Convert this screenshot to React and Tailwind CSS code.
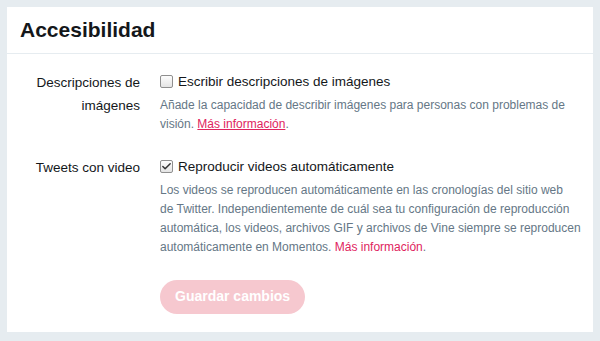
import { Check } from "lucide-react";

const font = { fontFamily: '"Liberation Sans", Arial, sans-serif' };

function Box({ checked }) {
  return (
    <span className="mt-[4px] flex h-[13px] w-[13px] shrink-0 items-center justify-center rounded-[2px] border border-[#8f8f8f] bg-gradient-to-b from-[#fdfdfd] to-[#e4e4e4]">
      {checked && <Check size={11} strokeWidth={3.2} className="text-[#333]" />}
    </span>
  );
}

function Row({ label, option, checked, children }) {
  return (
    <div className="flex">
      <div className="w-[133px] shrink-0 text-right text-[13.5px] leading-[23px] text-[#14171a]">{label}</div>
      <div className="ml-[20px] w-[425px]">
        <label className="flex items-start gap-[5px] text-[13.5px] leading-[21px] text-[#14171a]">
          <Box checked={checked} />
          {option}
        </label>
        <p className="mt-[4px] text-[12px] leading-[19.3px] text-[#657786]">{children}</p>
      </div>
    </div>
  );
}

export default function App() {
  return (
    <div className="h-[341px] w-[600px] bg-[#e6ecf0] px-[7px] pt-[7px]" style={font}>
      <div className="h-[325px] bg-white">
        <div className="border-b border-[#e6ecf0] px-[13px] pt-[8px] pb-[8px]">
          <h1 className="text-[21px] font-bold leading-[30px] text-[#14171a]">Accesibilidad</h1>
        </div>
        <div className="flex flex-col gap-[21px] pt-[17px]">
          <Row label="Descripciones de imágenes" option="Escribir descripciones de imágenes" checked={false}>
            Añade la capacidad de describir imágenes para personas con problemas de
            <br />
            visión. <a href="#" className="text-[#e0245e] underline">Más información</a>.
          </Row>
          <Row label="Tweets con video" option="Reproducir videos automáticamente" checked>
            Los videos se reproducen automáticamente en las cronologías del sitio web
            <br />
            de Twitter. Independientemente de cuál sea tu configuración de reproducción
            <br />
            automática, los videos, archivos GIF y archivos de Vine siempre se reproducen
            <br />
            automáticamente en Momentos. <a href="#" className="text-[#e0245e]">Más información</a>.
          </Row>
        </div>
        <div className="pl-[153px] pt-[22px]">
          <button className="h-[34px] rounded-full bg-[#f6c8cf] px-[15px] text-[14px] font-bold text-white">
            Guardar cambios
          </button>
        </div>
      </div>
    </div>
  );
}
